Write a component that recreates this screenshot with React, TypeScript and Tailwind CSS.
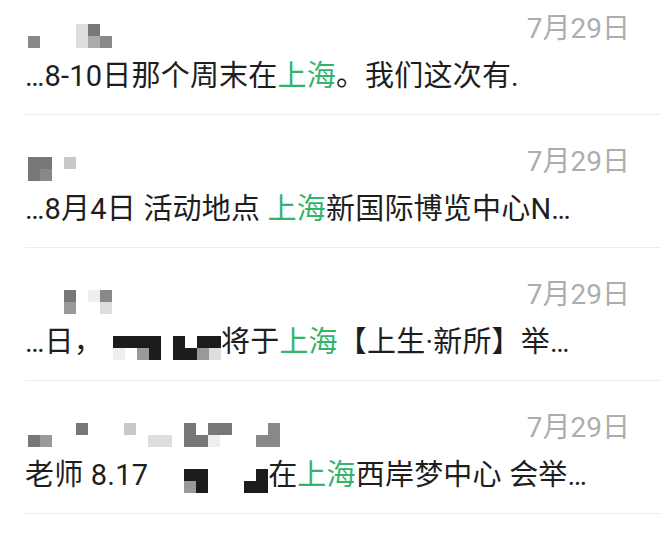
import React from "react";

const COLORS: Record<string, string> = {
  a: "bg-[#777777]",
  b: "bg-[#888888]",
  c: "bg-[#999999]",
  d: "bg-[#aaaaaa]",
  e: "bg-[#c8c8c8]",
  f: "bg-[#dddddd]",
  g: "bg-[#eeeeee]",
  k: "bg-[#1c1c1c]",
};

function Mosaic({ rows, className = "" }: { rows: string[]; className?: string }) {
  return (
    <div className={`flex shrink-0 flex-col ${className}`}>
      {rows.map((r, i) => (
        <div key={i} className="flex">
          {r.split("").map((ch, j) => (
            <div key={j} className={`h-[12px] w-[12px] ${COLORS[ch] ?? ""}`} />
          ))}
        </div>
      ))}
    </div>
  );
}

const G = ({ children }: { children: React.ReactNode }) => (
  <span className="text-[#33b46d]">{children}</span>
);

type Item = {
  title: string[];
  body: React.ReactNode;
};

const ITEMS: Item[] = [
  {
    title: ["....fa.", "b...fdb"],
    body: (
      <span>
        …8-10日那个周末在<G>上海</G>。我们这次有.
      </span>
    ),
  },
  {
    title: ["aa.e", "ab.."],
    body: (
      <span>
        …8月4日 活动地点 <G>上海</G>新国际博览中心N…
      </span>
    ),
  },
  {
    title: ["...a.gb", "...c..f"],
    body: (
      <>
        <span>…日，</span>
        <Mosaic rows={["kkkk.k.kk", "g.ck.kkcf"]} className="ml-[10px] translate-y-[6px]" />
        <span>
          将于<G>上海</G>【上生·新所】举…
        </span>
      </>
    ),
  },
  {
    title: ["....a...e....a.aa...b", "ac........ff.aag...bb"],
    body: (
      <>
        <span>老师 8.17</span>
        <Mosaic rows={["...kk....k", "...ck...kk"]} className="translate-y-[6px]" />
        <span>
          在<G>上海</G>西岸梦中心 会举…
        </span>
      </>
    ),
  },
];

export default function App() {
  return (
    <div
      className="h-[535px] w-[660px] overflow-hidden bg-white text-[#1e1e1e]"
      style={{ fontFamily: "Roboto, 'Noto Sans CJK SC', sans-serif" }}
    >
      <div className="-mt-[18px]">
        {ITEMS.map((it, i) => (
          <div key={i} className="ml-[25px] h-[133px] border-b border-[#ececec]">
            <div className="flex items-start justify-between">
              <Mosaic rows={it.title} className="ml-[3px] mt-[42px]" />
              <div className="mr-[30px] mt-[33px] text-[28px] leading-[28px] text-[#adadad]">
                7月29日
              </div>
            </div>
            <div className="mt-[8px] flex items-center whitespace-nowrap text-[29px] leading-[40px] tracking-[0.2px]">
              {it.body}
            </div>
          </div>
        ))}
      </div>
    </div>
  );
}
